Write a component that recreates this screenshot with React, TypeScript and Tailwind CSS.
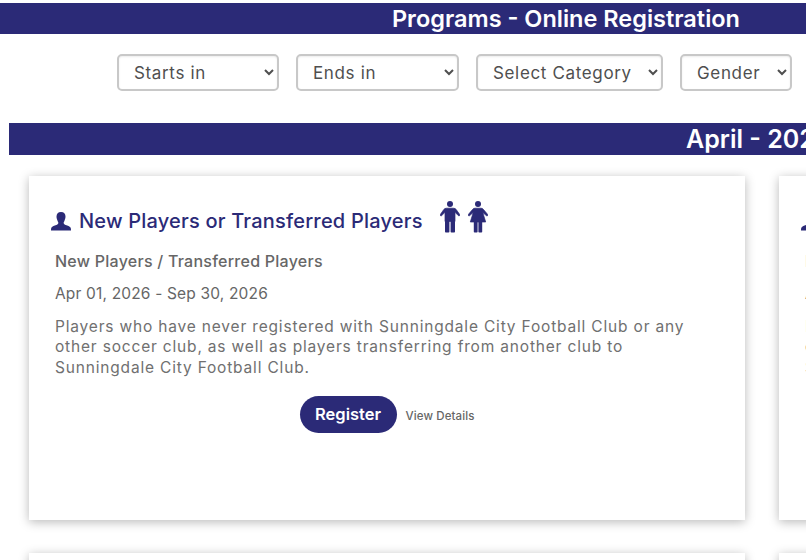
const navy = "bg-[#2b2a77]";

function UserIcon() {
  return (
    <svg width="20" height="19" viewBox="0 0 20 19" className="shrink-0 text-[#2b2a77]" fill="currentColor">
      <path d="M10 0c3 0 4.500 1.800 4.500 4.600 0 1.700-.5 3.100-1.100 4.300-.5 1-.9 1.400-.7 2.400.2.900 1 1.300 2 1.700 2 .8 4 1.300 4.800 2.500.4.600.5 1.500.5 3H0c0-1.500.1-2.400.5-3 .8-1.200 2.800-1.700 4.800-2.500 1-.4 1.800-.8 2-1.700.2-1-.2-1.400-.7-2.400-.6-1.200-1.100-2.600-1.100-4.300C5.500 1.800 7 0 10 0z" />
    </svg>
  );
}

function MaleIcon() {
  return (
    <svg width="20" height="32" viewBox="0 0 20 32" className="shrink-0 text-[#2b2a77]" fill="currentColor">
      <circle cx="10" cy="3" r="3" />
      <path stroke="currentColor" strokeWidth="0.7" d="M6.500 7.200h7c1.200 0 2 .5 2.700 1.300l3.500 5c.6.900-.6 1.900-1.400 1.100l-3.300-3.300v9.200H5v-9.200l-3.300 3.300c-.8.800-2-.2-1.400-1.100l3.500-5c.7-.8 1.500-1.300 2.700-1.300z" />
      <rect x="5" y="20" width="4.400" height="11.500" rx="0.800" />
      <rect x="10.600" y="20" width="4.400" height="11.500" rx="0.800" />
    </svg>
  );
}

function FemaleIcon() {
  return (
    <svg width="20" height="32" viewBox="0 0 20 32" className="shrink-0 text-[#2b2a77]" fill="currentColor">
      <circle cx="10" cy="3" r="3" />
      <path stroke="currentColor" strokeWidth="0.7" d="M7 7.200h6c1.100 0 1.900.5 2.500 1.300l4.200 5c.6.900-.6 1.900-1.400 1.100l-3.500-3 2.900 9.400H2.300l2.900-9.400-3.500 3c-.8.800-2-.2-1.400-1.100l4.200-5C5.100 7.700 5.900 7.200 7 7.200z" />
      <rect x="5.800" y="20" width="3.800" height="11.500" rx="0.800" />
      <rect x="10.400" y="20" width="3.800" height="11.500" rx="0.800" />
    </svg>
  );
}

function Filter({ label, width }: { label: string; width: string }) {
  return (
    <select className={`${width} h-[37px] rounded-[5px] border-2 border-[#c8c8c8] bg-white pl-[11px] pr-[4px] text-[17px] tracking-[0.65px] text-[#4f4f4f] shadow-[inset_0_1px_2px_rgba(0,0,0,0.08)]`} defaultValue={label}>
      <option>{label}</option>
    </select>
  );
}

function Card() {
  return (
    <div className="h-[344px] bg-white pl-[22px] pr-[26px] pt-[26px] shadow-[0_2px_10px_rgba(0,0,0,0.28)]">
      <div className="flex h-[38px] items-center">
        <UserIcon />
        <h3 className="ml-[8px] whitespace-nowrap text-[20px] font-medium leading-none tracking-[0.2px] text-[#2b2a77]">New Players or Transferred Players</h3>
        <div className="ml-[17px] mb-[8px] flex gap-[8px]">
          <MaleIcon />
          <FemaleIcon />
        </div>
      </div>
      <div className="pl-[4px]">
        <p className="mt-[9px] text-[16px] font-medium leading-[24px] tracking-[0.25px] text-[#666666]">New Players / Transferred Players</p>
        <p className="mt-[9px] text-[15.500px] leading-[24px] tracking-[0.17px] text-[#666666]">Apr 01, 2026 - Sep 30, 2026</p>
        <p className="mt-[11px] text-[15.500px] leading-[20.400px] tracking-[0.82px] text-[#707070]">
          Players who have never registered with Sunningdale City Football Club or any other soccer club, as well as players transferring from another club to Sunningdale City Football Club.
        </p>
        <div className="mt-[18px] flex items-center justify-center">
          <button className={`${navy} h-[37px] w-[97px] rounded-full text-[16.500px] font-semibold text-white`}>Register</button>
          <a className="ml-[9px] mt-[3px] text-[11.500px] font-medium tracking-[0.1px] text-[#666666]">View Details</a>
        </div>
      </div>
    </div>
  );
}

export default function App() {
  return (
    <div className="h-[560px] w-[806px] overflow-hidden bg-white pt-[3px] font-['Inter','Open_Sans',sans-serif]">
      <div className={`${navy} flex h-[31px] items-center justify-end pr-[66px]`}>
        <h1 className="text-[23.500px] font-semibold leading-none text-white">Programs - Online Registration</h1>
      </div>
      <div className="mt-[20px] flex justify-end gap-[17px] pr-[14px]">
        <Filter label="Starts in" width="w-[162px]" />
        <Filter label="Ends in" width="w-[163px]" />
        <Filter label="Select Category" width="w-[187px]" />
        <Filter label="Gender" width="w-[112px]" />
      </div>
      <div className={`${navy} mt-[32px] ml-[9px] flex h-[32px] items-center overflow-hidden whitespace-nowrap pl-[677px]`}>
        <h2 className="text-[25px] font-semibold leading-none text-white">April - 2026</h2>
      </div>
      <div className="ml-[29px] mt-[21px] grid grid-cols-[716px_716px] gap-x-[34px] gap-y-[33px]">
        <Card />
        <Card />
        <Card />
        <Card />
      </div>
    </div>
  );
}
